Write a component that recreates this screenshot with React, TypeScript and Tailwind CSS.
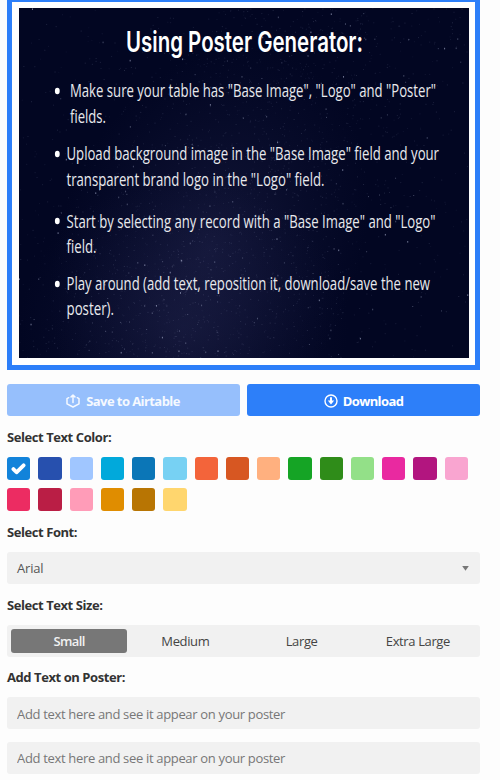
import React from "react";

const colors = [
  "#1283da", "#2750ae", "#a0c6ff", "#01a9db", "#0b76b7", "#77d1f3", "#f3643a", "#d75722",
  "#ffb07f", "#15a425", "#2f8c19", "#93e088", "#e929a0", "#b2157f", "#f9a5d0", "#ec2c62",
  "#ba1e45", "#ff9cb8", "#e08d00", "#b87503", "#ffd66e",
];

function createStars() {
  let seed = 4217;
  const random = () => {
    seed = (seed * 1664525 + 1013904223) % 4294967296;
    return seed / 4294967296;
  };
  const stars: { x: number; y: number; h: number; opacity: number }[] = [];
  for (let i = 0; i < 2300; i++) {
    const y = random() * 350;
    const band = i > 650;
    const center = 275 - y * 0.33;
    const x = band ? center + (random() + random() + random() - 1.5) * 175 : random() * 450;
    const bright = random();
    stars.push({
      x, y,
      h: bright > 0.96 ? 1.6 : 1,
      opacity: bright > 0.985 ? 0.6 : bright > 0.93 ? 0.36 : 0.06 + random() * 0.12,
    });
  }
  return stars;
}
const stars = createStars();

const CONDENSE = 0.75;

const lines = [
  { text: 'Make sure your table has "Base Image", "Logo" and "Poster"', x: 51, y: 89.3, width: 366 },
  { text: "fields.", x: 51, y: 114.5, width: 36 },
  { text: 'Upload background image in the "Base Image" field and your', x: 47.5, y: 152.4, width: 372.5 },
  { text: 'transparent brand logo in the "Logo" field.', x: 47.5, y: 177.5, width: 258 },
  { text: 'Start by selecting any record with a "Base Image" and "Logo"', x: 47.5, y: 219.5, width: 369 },
  { text: "field.", x: 47.5, y: 244.5, width: 30 },
  { text: "Play around (add text, reposition it, download/save the new", x: 47.5, y: 282, width: 363.5 },
  { text: "poster).", x: 47.5, y: 307.2, width: 47.5 },
];

function Poster() {
  return (
    <svg width="450" height="350" viewBox="0 0 450 350" className="block overflow-visible bg-[#020622]">
      <defs>
        <radialGradient id="haze">
          <stop offset="0" stopColor="#2b2d58" stopOpacity=".42" />
          <stop offset="1" stopColor="#1c204a" stopOpacity="0" />
        </radialGradient>
        <clipPath id="frame"><rect width="450" height="350" /></clipPath>
      </defs>
      <g clipPath="url(#frame)">
        <ellipse cx="190" cy="240" rx="150" ry="210" transform="rotate(22 190 240)" fill="url(#haze)" />
        <ellipse cx="165" cy="320" rx="165" ry="150" fill="url(#haze)" opacity=".8" />
        {stars.map((s, i) => (
          <rect key={i} x={s.x} y={s.y} width="1" height={s.h} fill="#bac1df" opacity={s.opacity} />
        ))}
      </g>
      <text x="107" y="44" textLength="237" lengthAdjust="spacingAndGlyphs" fill="white" className="font-['Inter',sans-serif] text-[28.5px] font-semibold">
        Using Poster Generator:
      </text>
      {lines.map((l) => (
        <text key={l.text} transform={`translate(${l.x} ${l.y}) scale(${CONDENSE} 1)`} textLength={l.width / CONDENSE} lengthAdjust="spacingAndGlyphs" fill="#e8e9ed" className="font-['Open_Sans',sans-serif] text-[19px]">
          {l.text}
        </text>
      ))}
      {[83, 146, 213, 276].map((y) => (
        <ellipse key={y} cx="38.3" cy={y} rx="2.4" ry="3.2" fill="white" />
      ))}
    </svg>
  );
}

function Label({ children }: { children: React.ReactNode }) {
  return <div className="h-4 whitespace-nowrap text-[13px] leading-4 font-bold tracking-[-0.43px] text-[#333333]">{children}</div>;
}

export default function App() {
  return (
    <main className="h-[780px] w-[500px] overflow-hidden bg-[#fdfdfd] pl-[7px] font-['Open_Sans','Noto_Sans',sans-serif] text-[13px] text-[#333333]">
      <div className="w-[473px]">
        <section className="h-[370px] border-x-[5px] border-t-2 border-b-[5px] border-[#2d7ff9] bg-white pt-1.5 pl-[7px]">
          <Poster />
        </section>

        <div className="mt-3.5 flex h-8 gap-[7px]">
          <button className="flex w-[233px] items-center justify-center gap-[6px] rounded-[3px] bg-[#96bffc] pt-1 pr-px font-bold tracking-[-0.57px] text-[#f5f9ff]">
            <svg width="14" height="14" viewBox="0 0 14 14" fill="none" stroke="currentColor" strokeWidth="1.5" strokeLinecap="round" strokeLinejoin="round" className="-mt-[3px]">
              <path d="M2.7 3.7 1 4.6v5.2l6 3.2 6-3.2V4.6l-1.7-.9M7 8.4V1.2M5.1 2.9 7 1l1.9 1.9" />
            </svg>
            <span>Save to Airtable</span>
          </button>
          <button className="flex w-[233px] items-center justify-center gap-[5px] rounded-[3px] bg-[#2d7ff9] pt-1 font-bold tracking-[-0.6px] text-white">
            <svg width="14" height="14" viewBox="0 0 14 14" fill="none" stroke="currentColor" strokeWidth="1.4" className="-mt-[3px]">
              <circle cx="7" cy="7" r="6" />
              <path d="M6 3.2h2v3.3h2.2L7 10.6 3.8 6.5H6Z" fill="currentColor" stroke="none" />
            </svg>
            <span>Download</span>
          </button>
        </div>

        <div className="mt-[13px]"><Label>Select Text Color:</Label></div>
        <div className="mt-3 flex flex-wrap gap-x-2 gap-y-[7.75px]">
          {colors.map((color, i) => (
            <div key={color} className="flex size-[23.25px] items-center justify-center rounded-[3px]" style={{ backgroundColor: color }}>
              {i === 0 && (
                <svg width="15" height="13" viewBox="0 0 15 13" fill="none" stroke="white" strokeWidth="3.8" strokeLinecap="round" strokeLinejoin="round">
                  <path d="m2.4 7.1 3.1 3.2 7.1-7" />
                </svg>
              )}
            </div>
          ))}
        </div>

        <div className="mt-[13px]"><Label>Select Font:</Label></div>
        <div className="mt-3 flex h-8 items-center justify-between rounded-[3px] bg-[#f1f1f1] pr-[11px] pl-2.5 text-[#555555]">
          <span className="tracking-[-0.2px]">Arial</span>
          <svg width="7" height="5" viewBox="0 0 7 5"><path d="M.2 0h6.6L3.5 4.8Z" fill="#777" /></svg>
        </div>

        <div className="mt-[13px]"><Label>Select Text Size:</Label></div>
        <div className="mt-3 grid h-8 grid-cols-4 rounded-[3px] bg-[#f1f1f1] p-1 text-[#444444]">
          {["Small", "Medium", "Large", "Extra Large"].map((size, i) => (
            <div key={size} className={i === 0 ? "flex items-center justify-center rounded-[3px] bg-[#777777] font-semibold tracking-[-0.6px] text-[#f1f1f1]" : "flex items-center justify-center tracking-[-0.37px]"}>
              {size}
            </div>
          ))}
        </div>

        <div className="mt-3"><Label>Add Text on Poster:</Label></div>
        <div className="mt-3 flex flex-col gap-[13px]">
          {["pt-px", "pt-0"].map((offset) => (
            <input key={offset} placeholder="Add text here and see it appear on your poster" className={`${offset} h-8 rounded-[3px] bg-[#f1f1f1] px-2.5 tracking-[-0.33px] outline-none placeholder:text-[#777777]`} />
          ))}
        </div>
      </div>
    </main>
  );
}
